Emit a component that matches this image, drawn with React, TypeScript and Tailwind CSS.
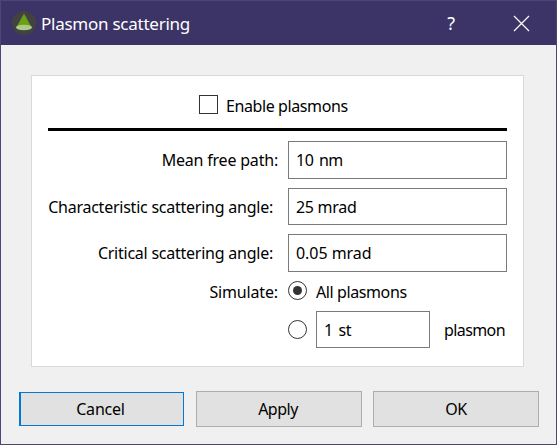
import type { ReactNode } from "react";

function Row({ label, className, children }: { label: string; className: string; children: ReactNode }) {
  return (
    <div className="flex h-[47px] shrink-0 items-start">
      <span className={`w-[240px] shrink-0 pt-[7px] text-right leading-[24px] whitespace-nowrap ${className}`}>{label}</span>
      {children}
    </div>
  );
}

function Field({ value, className = "h-[38px] w-[219px] leading-[37px] tracking-[-0.3px]" }: { value: string; className?: string }) {
  return <div className={`border border-[#7a7a7a] bg-white pl-[7px] whitespace-nowrap ${className}`}>{value}</div>;
}

function Radio({ checked = false }: { checked?: boolean }) {
  return (
    <span className="flex size-[19px] shrink-0 items-center justify-center rounded-full border border-[#333] bg-white">
      {checked && <span className="size-[9px] rounded-full bg-[#333]" />}
    </span>
  );
}

export default function App() {
  return (
    <div className="flex h-[445px] w-[557px] flex-col border border-[#4b4677] bg-[#f0f0f0] font-['Noto_Sans',sans-serif] text-[16px] tracking-[-0.5px] text-black">
      <header className="flex h-[44px] shrink-0 items-center bg-[#3c3466] text-white">
        <svg className="mb-[1px] ml-[11px] size-[24px]" viewBox="0 0 24 24">
          <circle cx="12" cy="12" r="12" fill="#434242" />
          <path d="M12 2.5 4.3 16.5h15.4z" fill="#69a014" />
          <ellipse cx="12" cy="16.5" rx="8" ry="2.7" fill="#abcb8b" />
        </svg>
        <span className="ml-[5px] grow pt-[2px] text-[17px] leading-[24px] tracking-[-0.25px] whitespace-nowrap">Plasmon scattering</span>
        <span className="w-[12px] text-center text-[18px]">?</span>
        <svg className="mr-[26px] ml-[56px] size-[17px]" viewBox="0 0 17 17" stroke="white" strokeWidth="1.2">
          <path d="M1 1l15 15M16 1 1 16" />
        </svg>
      </header>

      <main className="mt-[30px] ml-[30px] flex h-[292px] w-[493px] shrink-0 flex-col border border-[#d9d9d9] bg-white px-[16px] pt-[19px]">
        <div className="flex h-[33px] shrink-0 items-start pl-[151px]">
          <span className="size-[19px] border border-[#333] bg-white" />
          <span className="ml-[8px] leading-[22px] tracking-[-0.4px]">Enable plasmons</span>
        </div>
        <div className="mb-[10px] h-[3px] shrink-0 bg-black" />
        <Row label="Mean free path:" className="pr-[10px] tracking-[-0.2px]"><Field value="10 nm" className="h-[38px] w-[219px] leading-[37px] tracking-[-0.5px] [word-spacing:2px]" /></Row>
        <Row label="Characteristic scattering angle:" className="pr-[15px] tracking-[-0.24px]"><Field value="25 mrad" className="h-[37px] w-[219px] leading-[36px] tracking-[-0.3px]" /></Row>
        <div className="-mt-px flex h-[46px] shrink-0 items-start">
          <span className="w-[240px] shrink-0 pt-[7px] pr-[15px] text-right leading-[24px] tracking-[-0.24px] whitespace-nowrap">Critical scattering angle:</span>
          <Field value="0.05 mrad" className="h-[38px] w-[219px] leading-[37px] tracking-[-0.05px]" />
        </div>
        <div className="mt-px flex h-[30px] shrink-0 items-start">
          <span className="w-[240px] shrink-0 pr-[10px] text-right leading-[22px] tracking-[-0.15px]">Simulate:</span>
          <Radio checked />
          <span className="ml-[9px] leading-[22px] tracking-[-0.4px]">All plasmons</span>
        </div>
        <div className="flex h-[37px] shrink-0 items-center pl-[240px]">
          <Radio />
          <Field value="1 st" className="ml-[9px] h-[37px] w-[114px] leading-[36px] tracking-[-0.4px] [word-spacing:2px]" />
          <span className="ml-[14px] tracking-[-0.6px]">plasmon</span>
        </div>
      </main>

      <footer className="mt-[24px] flex h-[36px] shrink-0 items-center pl-[18px]">
        <button className="h-[34px] w-[165px] border border-l-2 border-[#0078d7] bg-[#e1e1e1] pr-[3px] tracking-[-0.2px]">Cancel</button>
        <button className="ml-[12px] h-[36px] w-[166px] border border-[#adadad] bg-[#e1e1e1] pr-[2px]">Apply</button>
        <button className="ml-[11px] h-[36px] w-[166px] border border-[#adadad] bg-[#e1e1e1]">OK</button>
      </footer>
    </div>
  );
}
